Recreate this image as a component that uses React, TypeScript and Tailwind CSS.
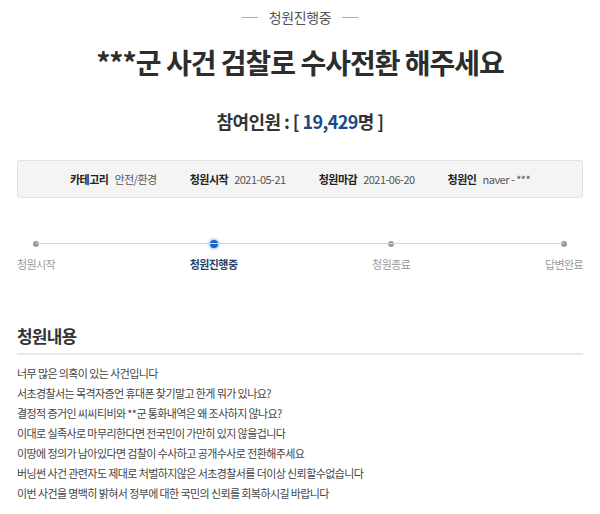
import React from "react";

const font = { fontFamily: '"Noto Sans CJK KR", "Noto Sans", sans-serif' };

const lines = [
  "너무 많은 의혹이 있는 사건입니다",
  "서초경찰서는 목격자증언 휴대폰 찾기말고 한게 뭐가 있나요?",
  "결정적 증거인 씨씨티비와 **군 통화내역은 왜 조사하지 않나요?",
  "이대로 실족사로 마무리한다면 전국민이 가만히 있지 않을겁니다",
  "이땅에 정의가 남아있다면 검찰이 수사하고 공개수사로 전환해주세요",
  "버닝썬 사건 관련자도 제대로 처벌하지않은 서초경찰서를 더이상 신뢰할수없습니다",
  "이번 사건을 명백히 밝혀서 정부에 대한 국민의 신뢰를 회복하시길 바랍니다",
];

export default function App() {
  return (
    <div className="w-[600px] h-[514px] bg-white overflow-hidden text-[#333]" style={font}>
      <div className="flex items-center justify-center gap-[11px] pt-[6px] h-[28px]">
        <div className="w-[16px] h-px bg-[#aaa]" />
        <span className="text-[14px] text-[#555] tracking-[-0.4px]">청원진행중</span>
        <div className="w-[16px] h-px bg-[#aaa]" />
      </div>
      <h1 className="mt-[16px] text-center text-[28px] leading-[36px] font-bold text-[#2d2d2d] tracking-[-1px]">
        ***군 사건 검찰로 수사전환 해주세요
      </h1>
      <div className="mt-[28px] text-center text-[18px] leading-[26px] font-bold text-[#333] tracking-[-0.6px]">
        참여인원 : [ <span className="text-[#1a4a86]">19,429</span>명 ]
      </div>
      <div className="mx-[17px] mt-[26px] h-[38px] bg-[#f4f4f4] border border-[#e2e2e2] rounded-[3px] flex items-center justify-center gap-[33px] text-[11px] tracking-[-0.5px]">
        <div className="flex gap-[6px]"><b className="text-[#222]">카테고리</b><span className="text-[#555]">안전/환경</span></div>
        <div className="flex gap-[6px]"><b className="text-[#222]">청원시작</b><span className="text-[#555]">2021-05-21</span></div>
        <div className="flex gap-[6px]"><b className="text-[#222]">청원마감</b><span className="text-[#555]">2021-06-20</span></div>
        <div className="flex gap-[6px]"><b className="text-[#222]">청원인</b><span className="text-[#555]">naver - ***</span></div>
      </div>
      <div className="mx-[17px] mt-[41px] relative">
        <div className="mx-[19px] h-px bg-[#d5d5d5] relative top-[4px]" />
        <div className="flex justify-between text-[11px] tracking-[-0.6px] text-[#999]">
          <div className="flex flex-col items-center gap-[8px]">
            <div className="w-[6px] h-[6px] rounded-full bg-[#999] my-px" />
            <span>청원시작</span>
          </div>
          <div className="flex flex-col items-center gap-[8px]">
            <div className="w-[8px] h-[8px] rounded-full bg-[#1d63c4] shadow-[0_0_3px_1px_rgba(60,130,230,0.6)]" />
            <span className="font-bold text-[#1f3f6e]">청원진행중</span>
          </div>
          <div className="flex flex-col items-center gap-[8px]">
            <div className="w-[6px] h-[6px] rounded-full bg-[#999] my-px" />
            <span>청원종료</span>
          </div>
          <div className="flex flex-col items-center gap-[8px]">
            <div className="w-[6px] h-[6px] rounded-full bg-[#999] my-px" />
            <span>답변완료</span>
          </div>
        </div>
      </div>
      <div className="mx-[17px] mt-[51px]">
        <h2 className="text-[17px] leading-[24px] font-bold text-[#333] tracking-[-0.8px]">청원내용</h2>
        <div className="mt-[5px] h-[2px] bg-[#e8e8e8]" />
        <div className="mt-[8px] text-[11px] leading-[20px] text-[#444] tracking-[-0.6px]">
          {lines.map((l) => (
            <p key={l}>{l}</p>
          ))}
        </div>
      </div>
    </div>
  );
}
